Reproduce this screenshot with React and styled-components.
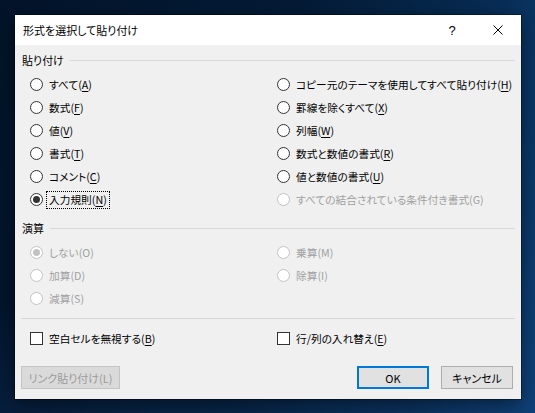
import React from 'react';
import styled, { createGlobalStyle } from 'styled-components';

const Global = createGlobalStyle`
  html, body { margin: 0; padding: 0; }
  body {
    width: 535px;
    height: 413px;
    overflow: hidden;
    font-family: "Noto Sans CJK JP", "Noto Sans", sans-serif;
    font-feature-settings: "palt";
  }
  * { box-sizing: border-box; }
`;

const Desktop = styled.div`
  width: 535px;
  height: 413px;
  padding: 15px 14px 14px 15px;
  background:
    linear-gradient(170deg, rgba(40, 110, 180, 0) 60%, rgba(20, 70, 130, 0.35) 100%),
    linear-gradient(100deg, #03142a 0%, #041b36 50%, #072b52 80%, #0d3f74 100%);
`;

const Window = styled.div`
  width: 506px;
  height: 384px;
  background: #f0f0f0;
  display: flex;
  flex-direction: column;
  box-shadow: 0 0 0 1px rgba(0, 0, 0, 0.35), 0 6px 18px rgba(0, 0, 0, 0.45);
`;

const TitleBar = styled.div`
  height: 30px;
  background: #ffffff;
  display: flex;
  align-items: center;
`;

const Title = styled.div`
  flex: 1;
  padding-left: 8px;
  font-size: 11px;
  color: #000;
  line-height: 30px;
`;

const CaptionButton = styled.div`
  width: 46px;
  height: 30px;
  display: flex;
  align-items: center;
  justify-content: center;
  font-family: "Liberation Sans", sans-serif;
  font-size: 13px;
  color: #000;
`;

const Body = styled.div`
  flex: 1;
  display: flex;
  flex-direction: column;
  padding: 7px 6px 10px 7px;
`;

const GroupHeader = styled.div`
  display: flex;
  align-items: center;
  gap: 6px;
  height: 16px;
  margin-top: ${(p) => p.$top || 0}px;
  font-size: 11px;
  color: #000;
  &::after {
    content: '';
    flex: 1;
    height: 1px;
    background: #d8d8d8;
  }
`;

const OptionGrid = styled.div`
  display: grid;
  grid-template-columns: 247px 1fr;
  grid-auto-rows: 23px;
  padding-left: 8px;
  margin-top: ${(p) => p.$top || 0}px;
`;

const Option = styled.div`
  display: flex;
  align-items: center;
  font-size: 10.7px;
  color: ${(p) => (p.$disabled ? '#a0a0a0' : '#000')};
  white-space: nowrap;
`;

const RadioCircle = styled.span`
  width: 13px;
  height: 13px;
  border-radius: 50%;
  border: 1px solid ${(p) => (p.$disabled ? '#c2c2c2' : '#333')};
  background: #fff;
  display: flex;
  align-items: center;
  justify-content: center;
  margin-right: 4px;
  flex: none;
  &::after {
    content: '';
    display: ${(p) => (p.$checked ? 'block' : 'none')};
    width: 7px;
    height: 7px;
    border-radius: 50%;
    background: ${(p) => (p.$disabled ? '#c2c2c2' : '#333')};
  }
`;

const CheckSquare = styled.span`
  width: 13px;
  height: 13px;
  border: 1px solid #333;
  background: #fff;
  margin-right: 4px;
  flex: none;
`;

const LabelText = styled.span`
  padding: 1px 2px;
  line-height: 14px;
  outline: ${(p) => (p.$focused ? '1px dotted #000' : 'none')};
  outline-offset: 0;
  u {
    text-decoration: underline;
    text-underline-offset: 2px;
  }
`;

const Separator = styled.div`
  height: 1px;
  background: #d8d8d8;
  margin: 8px 0 8px -1px;
`;

const ButtonRow = styled.div`
  display: flex;
  align-items: center;
  gap: 12px;
  margin-top: 16px;
  padding: 0 2px 0 0;
  margin-left: -1px;
`;

const Spacer = styled.div`
  flex: 1;
`;

const Button = styled.div`
  width: ${(p) => p.$w}px;
  height: 23px;
  display: flex;
  align-items: center;
  justify-content: center;
  font-size: 11px;
  background: ${(p) => (p.$disabled ? '#dadada' : '#e1e1e1')};
  color: ${(p) => (p.$disabled ? '#9a9a9a' : '#000')};
  border: ${(p) =>
    p.$default ? '2px solid #0078d7' : p.$disabled ? '1px solid #c4c4c4' : '1px solid #adadad'};
`;

const Label = ({ text, k, disabled, focused }) => (
  <LabelText $focused={focused}>
    {text}(
    {k && !disabled ? <u>{k}</u> : k}
    )
  </LabelText>
);

const Radio = ({ text, k, checked, disabled, focused }) => (
  <Option $disabled={disabled}>
    <RadioCircle $checked={checked} $disabled={disabled} />
    <Label text={text} k={k} disabled={disabled} focused={focused} />
  </Option>
);

const Check = ({ text, k }) => (
  <Option>
    <CheckSquare />
    <Label text={text} k={k} />
  </Option>
);

const pasteOptions = [
  { text: 'すべて', k: 'A' },
  { text: 'コピー元のテーマを使用してすべて貼り付け', k: 'H' },
  { text: '数式', k: 'F' },
  { text: '罫線を除くすべて', k: 'X' },
  { text: '値', k: 'V' },
  { text: '列幅', k: 'W' },
  { text: '書式', k: 'T' },
  { text: '数式と数値の書式', k: 'R' },
  { text: 'コメント', k: 'C' },
  { text: '値と数値の書式', k: 'U' },
  { text: '入力規則', k: 'N', checked: true, focused: true },
  { text: 'すべての結合されている条件付き書式', k: 'G', disabled: true },
];

const opOptions = [
  { text: 'しない', k: 'O', checked: true, disabled: true },
  { text: '乗算', k: 'M', disabled: true },
  { text: '加算', k: 'D', disabled: true },
  { text: '除算', k: 'I', disabled: true },
  { text: '減算', k: 'S', disabled: true },
];

export default function App() {
  return (
    <>
      <Global />
      <Desktop>
        <Window>
          <TitleBar>
            <Title>形式を選択して貼り付け</Title>
            <CaptionButton>?</CaptionButton>
            <CaptionButton>
              <svg width="10" height="10" viewBox="0 0 10 10">
                <path d="M0.5 0.5 L9.5 9.5 M9.5 0.5 L0.5 9.5" stroke="#000" strokeWidth="1" fill="none" />
              </svg>
            </CaptionButton>
          </TitleBar>
          <Body>
            <GroupHeader>貼り付け</GroupHeader>
            <OptionGrid $top={5}>
              {pasteOptions.map((o) => (
                <Radio key={o.text} {...o} />
              ))}
            </OptionGrid>
            <GroupHeader $top={9}>演算</GroupHeader>
            <OptionGrid $top={5}>
              {opOptions.map((o) => (
                <Radio key={o.text} {...o} />
              ))}
            </OptionGrid>
            <Separator />
            <OptionGrid>
              <Check text="空白セルを無視する" k="B" />
              <Check text="行/列の入れ替え" k="E" />
            </OptionGrid>
            <ButtonRow>
              <Button $w={99} $disabled>
                リンク貼り付け(L)
              </Button>
              <Spacer />
              <Button $w={72} $default>
                OK
              </Button>
              <Button $w={72}>キャンセル</Button>
            </ButtonRow>
          </Body>
        </Window>
      </Desktop>
    </>
  );
}
